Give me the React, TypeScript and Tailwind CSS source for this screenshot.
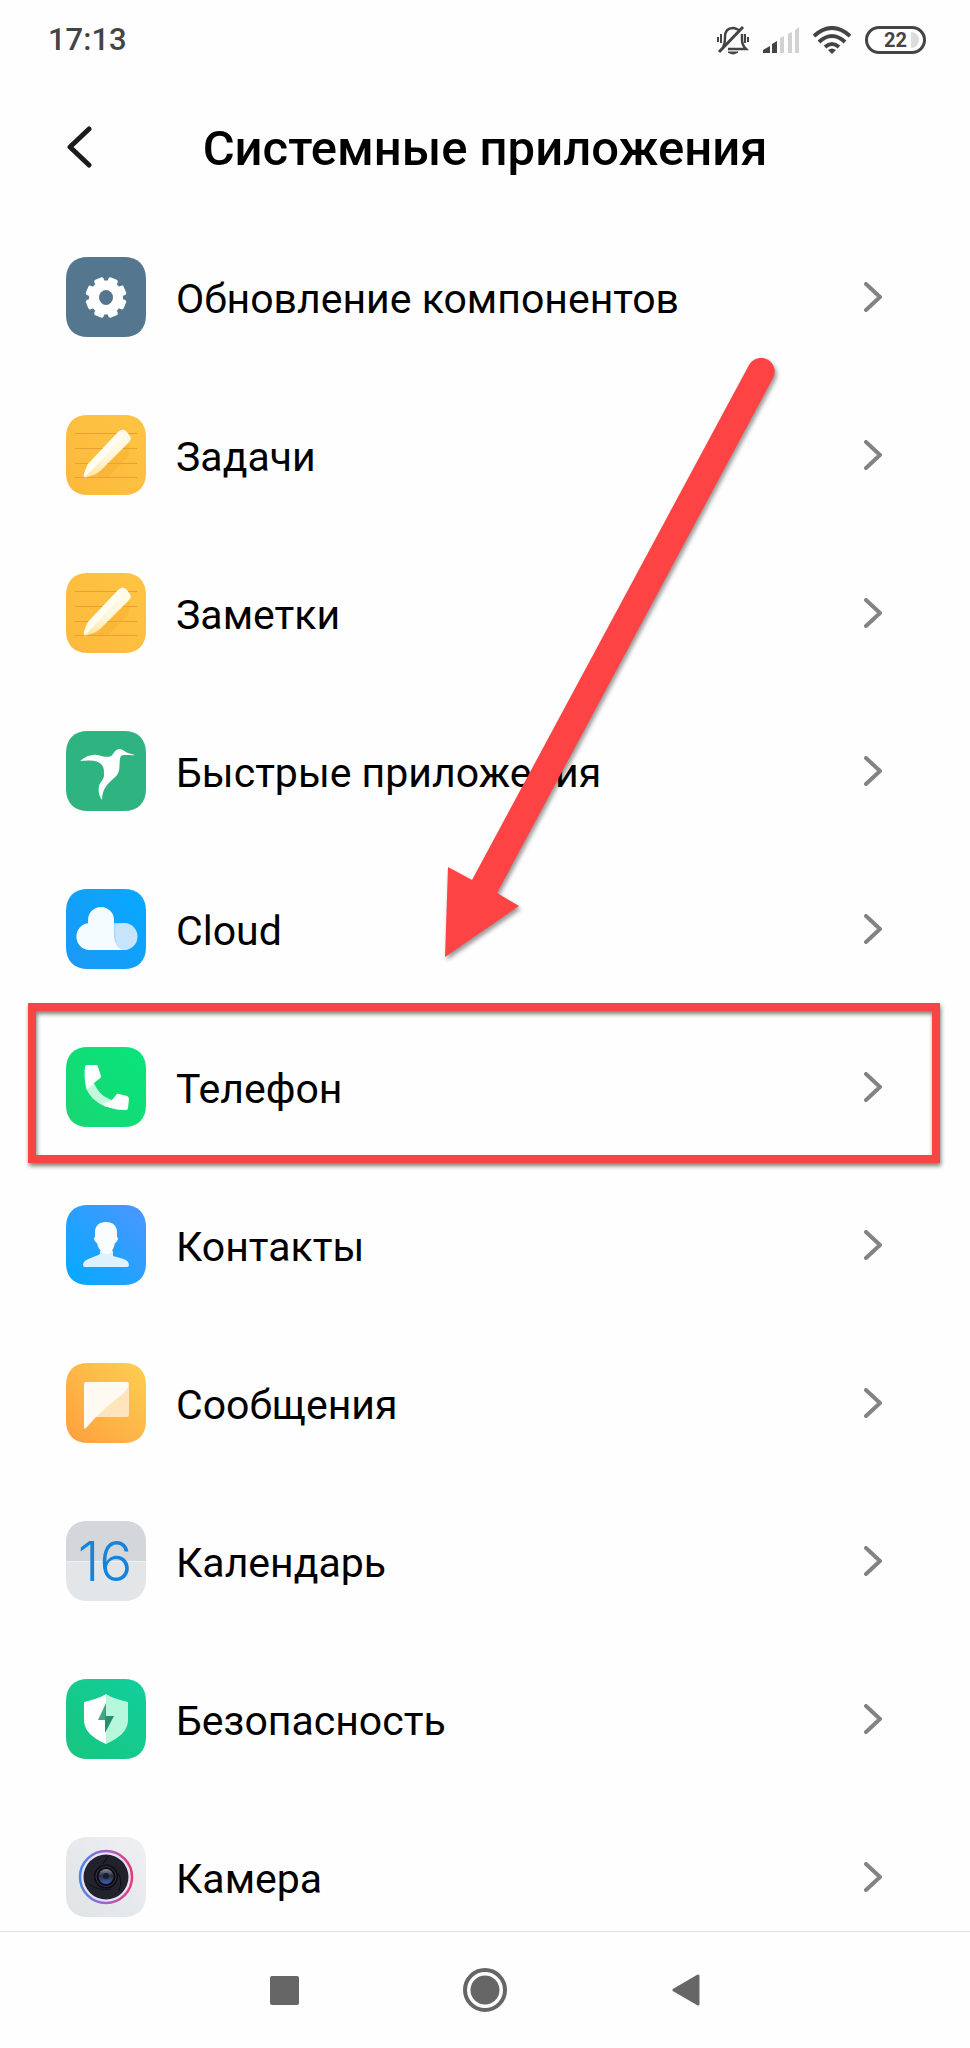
import type { ReactNode } from "react";
import clsx from "clsx";

/* ---------- App icons ---------- */

function AppIcon({ id, from, to, children }: { id: string; from: string; to: string; children: ReactNode }) {
	return (
		<svg viewBox="0 0 80 80" className="h-20 w-20 shrink-0" aria-hidden="true">
			<defs>
				<linearGradient id={id} x1="1" y1="0" x2="0" y2="1">
					<stop offset="0" stopColor={from} />
					<stop offset="1" stopColor={to} />
				</linearGradient>
			</defs>
			<path
				d="M22 0H58C72 0 80 8 80 22V58C80 72 72 80 58 80H22C8 80 0 72 0 58V22C0 8 8 0 22 0Z"
				fill={`url(#${id})`}
			/>
			{children}
		</svg>
	);
}

const UpdaterIcon = () => (
	<AppIcon id="updater" from="#54778f" to="#54778f">
		<circle cx="40" cy="40.5" r="17" fill="#fff" />
		{[22.5, 67.5, 112.5, 157.5].map((angle) => (
			<rect key={angle} x="35" y="20" width="10" height="41" rx="2" fill="#fff" transform={`rotate(${angle} 40 40.5)`} />
		))}
		<ellipse cx="40" cy="40.5" rx="7" ry="7.5" fill="#54778f" />
	</AppIcon>
);

const PencilIcon = ({ id }: { id: string }) => (
	<AppIcon id={id} from="#ffc444" to="#fcb93c">
		<defs>
			<linearGradient id={`${id}-pencil`} x1="0.9" y1="0.1" x2="0.1" y2="0.9">
				<stop offset="0" stopColor="#fffbe8" />
				<stop offset="0.6" stopColor="#fff6da" />
				<stop offset="1" stopColor="#ffe7a6" />
			</linearGradient>
		</defs>
		<path d="M9 18.5H71M9 33.5H71M9 48.5H71M9 62.5H71" stroke="#e5a134" strokeWidth="1" />
		<path d="M20 62L30 61L64 28L62 42L40 64Z" fill="#f3a92c" opacity="0.35" />
		<path
			d="M18 61Q18 56 22 49L52 17Q56 13 60 16L64 21Q66 24 63 27L34 56Q31 59 20 62.500Q18 63 18 61Z"
			fill={`url(#${id}-pencil)`}
		/>
		<path d="M22 49L52 18L56 23L26 55L19 62Q17 62 18 59Z" fill="#fffdf2" />
	</AppIcon>
);

const QuickAppsIcon = () => (
	<AppIcon id="quick" from="#2fb380" to="#2fb380">
		<path
			d="M14 30C20 25 26 23 31 24C36 25 41 27 45 25C48 23 48 19 53 18C57 18 59 21 62 22L69 24C64 25 58 23 55 25C53 28 54 35 53 40C51 46 46 48 41 54C37 59 36 64 36 69C33 65 32 60 33 55C34 51 38 49 38 44C38 39 38 36 35 33C31 29 25 29 14 30Z"
			fill="#fff"
		/>
	</AppIcon>
);

const CloudIcon = () => (
	<AppIcon id="cloud" from="#06a9ff" to="#1c98f5">
		<path d="M48 34H57.500A13.500 13.500 0 0 1 57.500 61H48Z" fill="#a9d5fb" />
		<path d="M58 34A13.500 13.500 0 0 1 58 61Q54 60 50 55L49 36Z" fill="#c6e5fd" />
		<path
			d="M22.500 61A13.500 13.500 0 0 1 22 34.200V31A13 13 0 0 1 48 31V46C48 54 52 60 58 61Z"
			fill="#f3fbff"
		/>
	</AppIcon>
);

const PhoneIcon = () => (
	<AppIcon id="phone" from="#08e47b" to="#19d672">
		<path d="M28 36C32 45 37 50 46 53L40 60C29 55 22 48 20 40Z" fill="#c3f8dc" />
		<path
			d="M21 18H30Q32 18 32 20L35 29Q35 31 33 32L28 36L21 43C19 37 18 29 19 20Q19 18 21 18Z"
			fill="#fff"
		/>
		<path
			d="M36 57L46 53L50 48Q51 46 53 47L61 49Q63 50 63 52L62 61Q62 63 60 63C50 63 42 61 36 57Z"
			fill="#fff"
		/>
	</AppIcon>
);

const ContactsIcon = () => (
	<AppIcon id="contacts" from="#4d96ff" to="#02aaff">
		<path d="M34 46H47V51C54 53 63 54 63 60Q63 62 61 62H19Q17 62 17 60C17 54 27 53 34 49Z" fill="#dff1ff" />
		<path
			d="M40 17C47 17 51 21 51 27V32Q53 33 51 36Q50 38 49 38C48 42 47 44 46 46C44 50 37 50 35 46C33 44 32 42 31 38Q30 38 29 36Q27 33 29 32V27C29 21 33 17 40 17Z"
			fill="#fafdff"
		/>
	</AppIcon>
);

const MessagesIcon = () => (
	<AppIcon id="messages" from="#fdcf52" to="#ff9f3d">
		<path d="M63 22V52Q63 54 61 54H29Z" fill="#ffe3ba" />
		<path d="M20 19H61Q63 19 63 21C62 27 55 33 48 38C40 44 37 48 30 54L20 65Q18 67 18 64V21Q18 19 20 19Z" fill="#fffaf1" />
	</AppIcon>
);

const CalendarIcon = () => (
	<AppIcon id="calendar" from="#e2e6e9" to="#e2e6e9">
		<path d="M22 0H58C72 0 80 8 80 22V40H0V22C0 8 8 0 22 0Z" fill="#d3d7db" />
		<path d="M0 40.500H80" stroke="#eff2f4" />
		<text x="39" y="60" textAnchor="middle" fill="#1583db" fontFamily="Inter, sans-serif" fontSize="55" fontWeight="300">
			16
		</text>
	</AppIcon>
);

const SecurityIcon = () => (
	<AppIcon id="security" from="#12cf9c" to="#17c57e">
		<path d="M40 15C46 19 54 21 62 23V41C62 53 51 60 40 65Z" fill="#b5f8db" />
		<path d="M40 15C34 19 26 21 18 23V41C18 53 29 60 40 65Z" fill="#fff" />
		<path d="M40 24L32 41H40Z" fill="#42a885" />
		<path d="M40 24V37H48L39 54V41Z" fill="#298d70" />
	</AppIcon>
);

const CameraIcon = () => (
	<AppIcon id="camera" from="#eef0f2" to="#dfe3e6">
		<defs>
			<linearGradient id="camera-ring" x1="0" y1="0.6" x2="1" y2="0.6">
				<stop offset="0" stopColor="#4c86e8" />
				<stop offset="0.5" stopColor="#9e63cf" />
				<stop offset="1" stopColor="#e8386f" />
			</linearGradient>
			<linearGradient id="camera-lens" x1="0" y1="0" x2="0" y2="1">
				<stop offset="0" stopColor="#8b8f9c" />
				<stop offset="0.45" stopColor="#2b2e40" />
				<stop offset="1" stopColor="#3f5fb4" />
			</linearGradient>
		</defs>
		<circle cx="40" cy="40" r="26" fill="#e9e2f6" stroke="url(#camera-ring)" strokeWidth="2.500" />
		<circle cx="40" cy="40" r="22.500" fill="#22222d" />
		<path d="M37 27L42 19M52 36Q57 43 53 54M23 47Q31 54 45 52" stroke="#0d0d13" fill="none" />
		<circle cx="40" cy="39.500" r="12" fill="#0c0c14" />
		<circle cx="40" cy="39.500" r="10" fill="none" stroke="#343a52" />
		<circle cx="40" cy="39.500" r="7.500" fill="url(#camera-lens)" />
		<circle cx="40" cy="39" r="3" fill="#191c2e" />
	</AppIcon>
);

const apps = [
	{ label: "Обновление компонентов", href: "#updater", icon: <UpdaterIcon /> },
	{ label: "Задачи", href: "#tasks", icon: <PencilIcon id="tasks" /> },
	{ label: "Заметки", href: "#notes", icon: <PencilIcon id="notes" /> },
	{ label: "Быстрые приложения", href: "#quick-apps", icon: <QuickAppsIcon /> },
	{ label: "Cloud", href: "#cloud", icon: <CloudIcon /> },
	{ label: "Телефон", href: "#phone", icon: <PhoneIcon />, highlighted: true },
	{ label: "Контакты", href: "#contacts", icon: <ContactsIcon /> },
	{ label: "Сообщения", href: "#messages", icon: <MessagesIcon /> },
	{ label: "Календарь", href: "#calendar", icon: <CalendarIcon /> },
	{ label: "Безопасность", href: "#security", icon: <SecurityIcon /> },
	{ label: "Камера", href: "#camera", icon: <CameraIcon /> },
];

/* ---------- Status bar ---------- */

function StatusBar() {
	return (
		<div className="flex h-20 items-center justify-between pl-12 pr-11 text-[#444]">
			<span className="text-[31px] font-medium">17:13</span>
			<div className="flex items-center gap-[14px]">
				{/* Muted bell */}
				<svg viewBox="0 0 32 30" className="h-[30px] w-8" fill="none" stroke="currentColor" strokeWidth="2" aria-hidden="true">
					<path d="M6 22C8 19 8 17 8 12C8 6 11 3 16 3C18 3 20 4 22 5M25 9V15C25 19 26 21 29 24H11" strokeWidth="2.500" />
					<path d="M2 27L26 2" strokeWidth="3" />
					<path d="M11 27H21Q16 31 11 27Z" fill="currentColor" strokeWidth="1" />
					<path d="M1 12V17M4 9V18M28 9V18M31 12V17" />
				</svg>
				{/* Signal strength */}
				<svg viewBox="0 0 36 26" className="h-[26px] w-9" aria-hidden="true">
					<path d="M0 26V23L7 19V26ZM9 26V17L14 14V26Z" fill="#444" />
					<path d="M17 26V11L21 9V26ZM25 26V7L29 5V26ZM32 26V3L36 0V26Z" fill="#d2d2d2" />
				</svg>
				{/* Wi-Fi */}
				<svg viewBox="0 0 38 28" className="h-7 w-[38px]" fill="none" stroke="currentColor" strokeWidth="4" aria-hidden="true">
					<path d="M1 10Q19 -6 37 10M6 16Q19 4 32 16M12 21Q19 15 26 21" />
					<path d="M15 24Q19 21 23 24L19 28Z" fill="currentColor" stroke="none" />
				</svg>
				{/* Battery */}
				<div className="flex h-7 w-[61px] items-center justify-end gap-1 rounded-full border-[3px] border-[#444] pr-1">
					<span className="text-[20px] font-bold leading-5">22</span>
					<span className="h-4 w-2 rounded-r-full bg-[#dcdcdc]" />
				</div>
			</div>
		</div>
	);
}

/* ---------- Red pointer arrow over the list ---------- */

function PointerArrow() {
	return (
		<svg
			viewBox="0 0 350 620"
			className="pointer-events-none absolute left-1/2 top-[136px] -ml-[45px] h-[620px] w-[350px] drop-shadow-[2px_3px_2px_rgba(0,0,0,0.4)]"
			aria-hidden="true"
		>
			<path d="M309 15A13.500 13.500 0 0 1 333 28L57 543L79 556L5 607L8 517L32 530Z" fill="#fd4344" />
		</svg>
	);
}

export default function App() {
	return (
		<div className="flex min-h-screen flex-col bg-[#fefefe] font-['Roboto',sans-serif] text-black">
			<StatusBar />

			<header className="grid h-[134px] grid-cols-[1fr_auto_1fr] items-center">
				<button aria-label="Назад" className="ml-[66px] w-fit">
					<svg viewBox="0 0 26 42" className="h-[42px] w-[26px]" fill="none" stroke="#1b1b1b" strokeWidth="5" strokeLinecap="round" strokeLinejoin="round" aria-hidden="true">
						<path d="M23 3L4 21L23 39" />
					</svg>
				</button>
				<h1 className="pt-[2px] text-[49px] font-medium leading-none">Системные приложения</h1>
			</header>

			<main className="relative grow pb-[14px] pt-[43px]">
				<ul className="flex flex-col gap-[78px]">
					{apps.map((app) => (
						<li key={app.label} className="relative">
							<a href={app.href} className="flex items-center pl-[66px] pr-[88px]">
								{app.icon}
								<span className="ml-[30px] grow pt-1 text-[41px] leading-none">{app.label}</span>
								<svg viewBox="0 0 18 30" className="h-[30px] w-[18px] shrink-0" fill="none" stroke="#838383" strokeWidth="4" strokeLinecap="round" strokeLinejoin="round" aria-hidden="true">
									<path d="M2 2L16 15L2 28" />
								</svg>
							</a>
							<div
								className={clsx(
									"pointer-events-none absolute -bottom-9 -top-11 left-7 right-[30px] border-8 border-[#f74544] drop-shadow-[1px_3px_2px_rgba(0,0,0,0.5)]",
									!app.highlighted && "hidden"
								)}
							/>
						</li>
					))}
				</ul>
				<PointerArrow />
			</main>

			{/* Android navigation keys */}
			<nav className="flex h-[117px] items-center justify-center border-t border-[#dedede] text-[#666]">
				<button aria-label="Недавние" className="flex w-[200px] justify-center">
					<span className="h-[29px] w-[29px] rounded-xs bg-[#666]" />
				</button>
				<button aria-label="Домой" className="flex w-[202px] justify-center">
					<svg viewBox="0 0 44 44" className="h-11 w-11" aria-hidden="true">
						<circle cx="22" cy="22" r="20" fill="none" stroke="currentColor" strokeWidth="4" />
						<circle cx="22" cy="22" r="14.500" fill="currentColor" />
					</svg>
				</button>
				<button aria-label="Назад" className="flex w-[200px] justify-center">
					<svg viewBox="0 0 28 34" className="h-[34px] w-7" aria-hidden="true">
						<path d="M2 17L26 3V31Z" fill="currentColor" stroke="currentColor" strokeWidth="3" strokeLinejoin="round" />
					</svg>
				</button>
			</nav>
		</div>
	);
}
